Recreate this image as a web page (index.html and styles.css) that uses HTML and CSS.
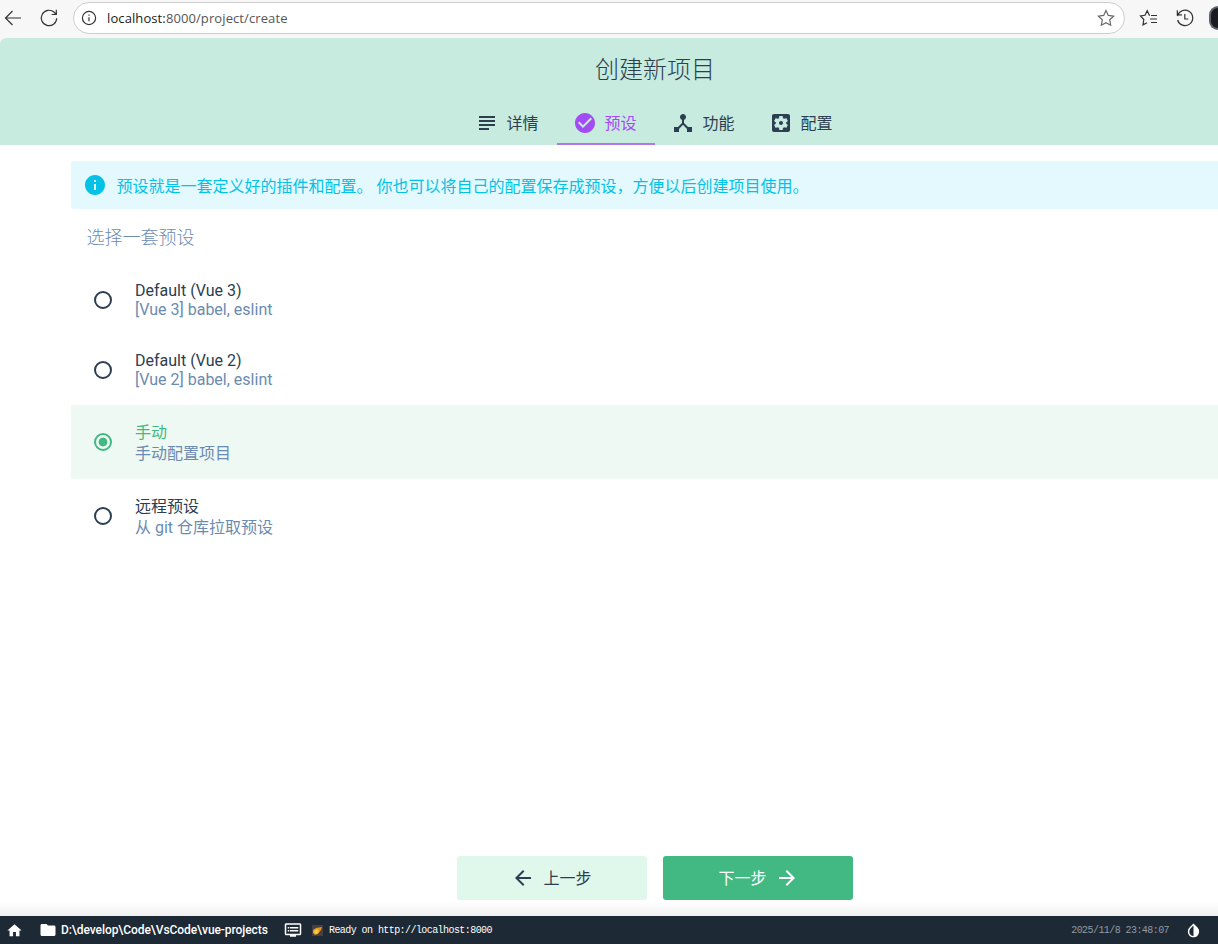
FILE: index.html
```html
<!DOCTYPE html>
<html lang="zh-CN">
<head>
    <meta charset="UTF-8">
    <meta name="viewport" content="width=device-width, initial-scale=1.0">
    <title>创建新项目</title>
    <link rel="stylesheet" href="styles.css">
</head>
<body>

    <div class="browser-bar">
        <svg class="nav-icon" viewBox="0 0 20 20"><path d="M18 10H2.5M9.5 3L2.5 10l7 7"/></svg>
        <svg class="nav-icon reload" viewBox="0 0 20 20"><path d="M17.7 10.2a7.7 7.7 0 1 1-2.5-5.9l1.9 2M17.3 1.8v4.7h-4.7"/></svg>
        <div class="address">
            <svg class="info-icon" viewBox="0 0 16 16"><circle cx="8" cy="8" r="6.6"/><path d="M8 7.2v4M8 4.5v1.3"/></svg>
            <span class="url"><b>localhost:</b>8000/project/create</span>
            <svg class="star" viewBox="0 0 20 20"><path d="M10 2.5l2.3 4.9 5.3.7-3.9 3.7 1 5.4-4.7-2.6-4.7 2.6 1-5.4-3.9-3.7 5.3-.7z"/></svg>
        </div>
        <svg class="nav-icon favorites" viewBox="0 0 20 20"><path d="M11 7.2h-.7L8.2 2.7 6 7.3l-4.5.7 3.3 3.5-.8 5.4 4-2.2M12 7.5h6M11 11h7M12 14.5h6"/></svg>
        <svg class="nav-icon history" viewBox="0 0 20 20"><path d="M2.5 8.2A7.7 7.7 0 1 1 2.6 12M2.3 2.2v4.7H7M2.7 6.5a8 8 0 0 1 2-2.3M9.8 6v5h3.5"/></svg>
        <div class="avatar"></div>
    </div>

    <div class="page">
        <div class="header">
            <h1>创建新项目</h1>
            <div class="tabs">
                <div class="tab">
                    <svg viewBox="0 0 24 24"><path d="M14 17H4v2h10v-2zm6-8H4v2h16V9zM4 15h16v-2H4v2zM4 5v2h16V5H4z"/></svg>
                    <span>详情</span>
                </div>
                <div class="tab active">
                    <svg viewBox="0 0 24 24"><path d="M12 2C6.48 2 2 6.48 2 12s4.48 10 10 10 10-4.48 10-10S17.52 2 12 2zm-2 15l-5-5 1.41-1.41L10 14.17l7.59-7.59L19 8l-9 9z"/></svg>
                    <span>预设</span>
                </div>
                <div class="tab">
                    <svg viewBox="0 0 24 24"><path d="M17 16l-4-4V8.82C14.16 8.4 15 7.3 15 6c0-1.66-1.34-3-3-3S9 4.34 9 6c0 1.3.84 2.4 2 2.82V12l-4 4H3v5h5v-3.05l4-4.2 4 4.2V21h5v-5h-4z"/></svg>
                    <span>功能</span>
                </div>
                <div class="tab">
                    <svg viewBox="0 0 24 24"><path d="M12 10c-1.1 0-2 .9-2 2s.9 2 2 2 2-.9 2-2-.9-2-2-2zm7-7H5c-1.11 0-2 .9-2 2v14c0 1.1.89 2 2 2h14c1.11 0 2-.9 2-2V5c0-1.1-.89-2-2-2zm-1.75 9c0 .23-.02.46-.05.68l1.48 1.16c.13.11.17.3.08.45l-1.4 2.42c-.09.15-.27.21-.43.15l-1.74-.7c-.36.28-.76.51-1.18.69l-.26 1.85c-.03.17-.18.3-.35.3h-2.8c-.17 0-.32-.13-.35-.29l-.26-1.85c-.43-.18-.82-.41-1.18-.69l-1.74.7c-.16.06-.34 0-.43-.15l-1.4-2.42c-.09-.15-.05-.34.08-.45l1.48-1.16c-.03-.23-.05-.46-.05-.69s.02-.46.05-.68l-1.48-1.16c-.13-.11-.17-.3-.08-.45l1.4-2.42c.09-.15.27-.21.43-.15l1.74.7c.36-.28.76-.51 1.18-.69l.26-1.85c.03-.17.18-.3.35-.3h2.8c.17 0 .32.13.35.29l.26 1.85c.43.18.82.41 1.18.69l1.74-.7c.16-.06.34 0 .43.15l1.4 2.42c.09.15.05.34-.08.45l-1.48 1.16c.03.23.05.46.05.69z"/></svg>
                    <span>配置</span>
                </div>
            </div>
        </div>

        <div class="content">
            <div class="info">
                <svg viewBox="0 0 24 24"><path d="M12 2C6.48 2 2 6.48 2 12s4.48 10 10 10 10-4.48 10-10S17.52 2 12 2zm1 15h-2v-6h2v6zm0-8h-2V7h2v2z"/></svg>
                <span>预设就是一套定义好的插件和配置。 你也可以将自己的配置保存成预设，方便以后创建项目使用。</span>
            </div>
            <div class="list-title">选择一套预设</div>

            <div class="preset">
                <div class="radio"></div>
                <div class="preset-info">
                    <div class="name">Default (Vue 3)</div>
                    <div class="description">[Vue 3] babel, eslint</div>
                </div>
            </div>
            <div class="preset">
                <div class="radio"></div>
                <div class="preset-info">
                    <div class="name">Default (Vue 2)</div>
                    <div class="description">[Vue 2] babel, eslint</div>
                </div>
            </div>
            <div class="preset cjk selected">
                <div class="radio"></div>
                <div class="preset-info">
                    <div class="name">手动</div>
                    <div class="description">手动配置项目</div>
                </div>
            </div>
            <div class="preset cjk">
                <div class="radio"></div>
                <div class="preset-info">
                    <div class="name">远程预设</div>
                    <div class="description">从 git 仓库拉取预设</div>
                </div>
            </div>
        </div>

        <div class="actions">
            <button class="btn">
                <svg viewBox="0 0 24 24"><path d="M20 11H7.83l5.59-5.59L12 4l-8 8 8 8 1.41-1.41L7.83 13H20v-2z"/></svg>
                <span>上一步</span>
            </button>
            <button class="btn primary">
                <span>下一步</span>
                <svg viewBox="0 0 24 24"><path d="M12 4l-1.41 1.41L16.17 11H4v2h12.17l-5.58 5.59L12 20l8-8z"/></svg>
            </button>
        </div>
    </div>

    <div class="status-bar">
        <svg class="home" viewBox="0 0 24 24"><path d="M10 20v-6h4v6h5v-8h3L12 3 2 12h3v8z"/></svg>
        <svg class="folder" viewBox="0 0 24 24"><path d="M10 4H4c-1.1 0-1.99.9-1.99 2L2 18c0 1.1.9 2 2 2h16c1.1 0 2-.9 2-2V8c0-1.1-.9-2-2-2h-8l-2-2z"/></svg>
        <span class="path">D:\develop\Code\VsCode\vue-projects</span>
        <svg class="console" viewBox="0 0 24 24"><path d="M21 3H3c-1.1 0-2 .9-2 2v12c0 1.1.9 2 2 2h5v2h8v-2h5c1.1 0 2-.9 2-2V5c0-1.1-.9-2-2-2zm0 14H3V5h18v12zm-2-9H8v2h11V8zm0 4H8v2h11v-2zM7 8H5v2h2V8zm0 4H5v2h2v-2z"/></svg>
        <svg class="comet" viewBox="0 0 11 11"><path fill="#4a3c43" d="M0 0h11v11H0z"/><path fill="#d99a20" d="M1 5l3-2 6-1-1 3-3 4-3 1-2-2z"/><path fill="#f7c83c" d="M2 6l3-2 2 2-2 3-3-1z"/></svg>
        <span class="log">Ready on http://localhost:8000</span>
        <span class="date">2025/11/8 23:48:07</span>
        <svg class="theme" viewBox="0 0 24 24"><path d="M17.66 7.93L12 2.27 6.34 7.93c-3.12 3.12-3.12 8.19 0 11.31C7.9 20.8 9.95 21.58 12 21.58s4.1-.78 5.66-2.34c3.12-3.12 3.12-8.19 0-11.31zM12 19.59c-1.6 0-3.11-.62-4.24-1.76C6.62 16.69 6 15.19 6 13.59s.62-3.11 1.76-4.24L12 5.1v14.49z"/></svg>
    </div>

</body>
</html>
```
FILE: styles.css
```css
* {
    box-sizing: border-box;
}
body {
    margin: 0;
    height: 944px;
    overflow: hidden;
    display: flex;
    flex-direction: column;
    background-color: #f7f7f7;
    color: #2c3e50;
    font-family: Roboto, "Noto Sans CJK SC", sans-serif;
    font-size: 16px;
}
svg {
    flex: none;
    fill: currentColor;
}

/* browser toolbar */
.browser-bar {
    flex: none;
    height: 38px;
    padding: 0 0 2px 3px;
    display: flex;
    align-items: center;
    color: #333;
}
.browser-bar svg {
    fill: none;
    stroke: currentColor;
    stroke-width: 1.2;
}
.nav-icon {
    width: 20px;
    height: 20px;
}
.reload {
    margin: 0 15px 0 16px;
}
.address {
    flex: none;
    width: 1052px;
    height: 32px;
    margin-left: -1px;
    padding: 0 8px 0 7px;
    display: flex;
    align-items: center;
    background-color: #fff;
    border: 1px solid #cecece;
    border-radius: 16px;
}
.info-icon {
    width: 16px;
    height: 16px;
    margin-right: 10px;
}
.url {
    flex: 1;
    font-family: "Open Sans", sans-serif;
    font-size: 13px;
    letter-spacing: 0.1px;
    color: #555;
}
.url b {
    font-weight: 400;
    color: #1b1b1b;
}
.star {
    width: 20px;
    height: 20px;
    color: #666;
}
.favorites {
    margin: 0 16px 0 14px;
}
.avatar {
    width: 9px;
    height: 24px;
    margin-left: 14px;
    border: 2px solid #5b626d;
    border-right: none;
    border-radius: 12px 0 0 12px;
    background-color: #191b1f;
}

.page {
    flex: 1;
    display: flex;
    flex-direction: column;
    background-color: #fff;
    border-radius: 6px 0 0 0;
}
.header {
    height: 107px;
    padding-left: 92px;
    background-color: #c7ebdf;
    border-radius: 6px 0 0 0;
    display: flex;
    flex-direction: column;
    align-items: center;
}
h1 {
    margin: 14px 0 0;
    height: 49px;
    font-size: 24px;
    font-weight: 300;
    line-height: 36px;
}
.tabs {
    display: flex;
}
.tab {
    width: 98px;
    height: 44px;
    padding: 2px 16px 0;
    display: flex;
    align-items: center;
    gap: 8px;
    border-bottom: 2px solid transparent;
}
.tab svg {
    width: 24px;
    height: 24px;
}
.tab span {
    margin: -2px 0 0 -0.5px;
}
.tab.active {
    color: #a44cf4;
    border-color: #b077ea;
}
.content {
    flex: 1;
    padding: 16px 0 0 71px;
}
.info {
    height: 48px;
    padding: 0 12px;
    display: flex;
    align-items: center;
    gap: 10px;
    color: #03c2e6;
    background-color: #e4f9fe;
    border-radius: 3px 0 0 3px;
}
.info svg {
    width: 24px;
    height: 24px;
}
.info span {
    margin-left: -0.5px;
}
.list-title {
    height: 56px;
    padding: 1px 15.5px 0;
    font-size: 18px;
    font-weight: 300;
    line-height: 56px;
    color: #6b8bb0;
}
.preset {
    height: 70px;
    padding: 0 16px 0 23px;
    display: flex;
    align-items: center;
    gap: 23px;
    line-height: 19px;
}
.preset.cjk {
    height: 74px;
    line-height: 21px;
}
.cjk .preset-info {
    padding-top: 2px;
}
.radio {
    width: 18px;
    height: 18px;
    border: 2px solid #2c3e50;
    border-radius: 50%;
}
.description {
    color: #6b8bb0;
}
.selected {
    background-color: #eef9f4;
}
.selected .name {
    color: #42b983;
}
.selected .radio {
    border-color: #42b983;
    background: radial-gradient(circle, #42b983 4px, transparent 4.8px);
}
.actions {
    height: 76px;
    padding: 16px 0 0 92px;
    display: flex;
    justify-content: center;
    gap: 16px;
    background: linear-gradient(#fff 62px, #f0f0f0);
}
.btn {
    width: 190px;
    height: 44px;
    padding: 0 1px 0 0;
    display: flex;
    align-items: center;
    justify-content: center;
    gap: 8px;
    font: inherit;
    color: #2c3e50;
    background-color: #e0f7ec;
    border: none;
    border-radius: 3px;
}
.btn svg {
    width: 24px;
    height: 24px;
}
.btn span {
    margin-top: -2px;
}
.btn.primary {
    padding: 0 0 0 1px;
    color: #fff;
    background-color: #42b983;
}

/* status bar */
.status-bar {
    flex: none;
    height: 28px;
    padding: 0 16px 0 6px;
    display: flex;
    align-items: center;
    color: #fff;
    background-color: #1d2935;
}
.home {
    width: 17px;
    height: 17px;
}
.folder {
    width: 18px;
    height: 18px;
    margin: 0 4px 0 16px;
}
.path {
    width: 223px;
    font-size: 12px;
    font-weight: 500;
    letter-spacing: -0.07px;
}
.console {
    width: 18px;
    height: 18px;
}
.comet {
    width: 11px;
    height: 11px;
    margin: 0 6px 0 10px;
}
.log, .date {
    font-family: "Liberation Mono", monospace;
    font-size: 10px;
    letter-spacing: -0.57px;
}
.date {
    margin-left: auto;
    color: #919aa3;
}
.theme {
    width: 17px;
    height: 17px;
    margin-left: 16px;
}
```
